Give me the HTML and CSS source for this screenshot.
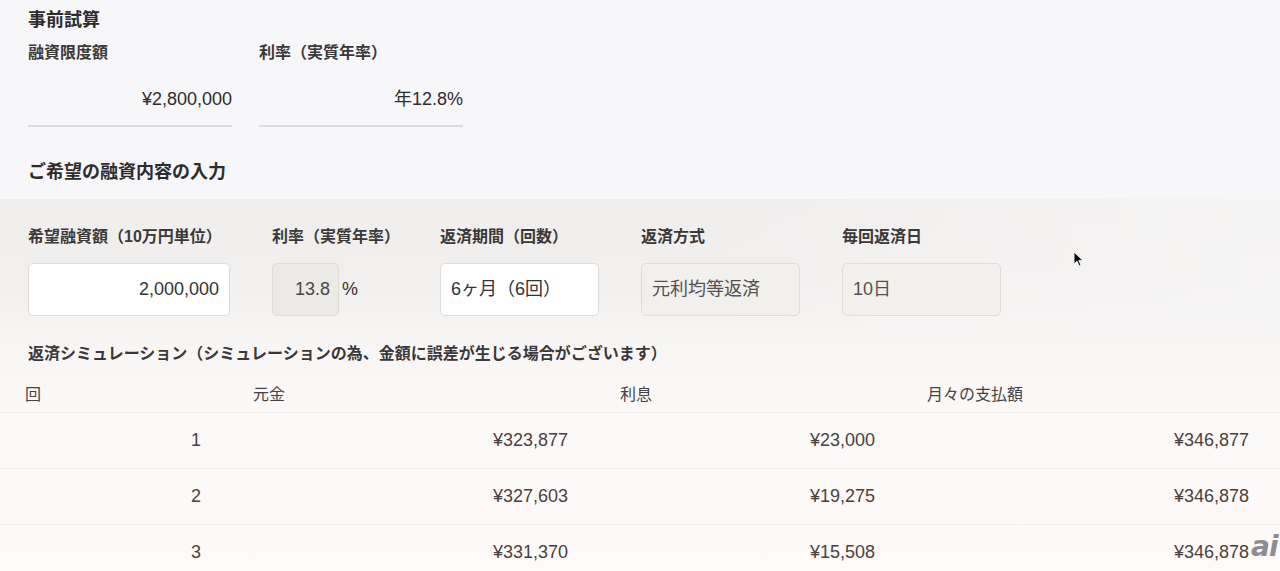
FILE: index.html
```html
<!DOCTYPE html>
<html lang="ja">
<head>
    <meta charset="UTF-8">
    <meta name="viewport" content="width=device-width, initial-scale=1.0">
    <title>事前試算</title>
    <link rel="stylesheet" href="styles.css">
</head>
<body>
    <div class="page">
        <!-- 事前試算 -->
        <section class="summary">
            <h2>事前試算</h2>
            <div class="summary-row">
                <div class="summary-item">
                    <div class="label">融資限度額</div>
                    <div class="summary-value">¥2,800,000</div>
                </div>
                <div class="summary-item">
                    <div class="label">利率（実質年率）</div>
                    <div class="summary-value">年12.8%</div>
                </div>
            </div>
            <h2 class="input-title">ご希望の融資内容の入力</h2>
        </section>

        <!-- Input panel -->
        <section class="panel">
            <div class="field-row">
                <div class="field field-amount">
                    <label class="label" for="amount">希望融資額（10万円単位）</label>
                    <input class="box box-right" id="amount" type="text" value="2,000,000">
                </div>
                <div class="field field-rate">
                    <div class="label">利率（実質年率）</div>
                    <div class="rate-wrap">
                        <div class="box box-disabled rate-box">13.8</div>
                        <span class="unit">%</span>
                    </div>
                </div>
                <div class="field field-wide">
                    <div class="label">返済期間（回数）</div>
                    <div class="box">6ヶ月（6回）</div>
                </div>
                <div class="field field-wide">
                    <div class="label">返済方式</div>
                    <div class="box box-disabled box-light">元利均等返済</div>
                </div>
                <div class="field field-wide">
                    <div class="label">毎回返済日</div>
                    <div class="box box-disabled box-light">10日</div>
                </div>
            </div>
        </section>

        <!-- Simulation -->
        <section class="simulation">
            <h3 class="label sim-title">返済シミュレーション（シミュレーションの為、金額に誤差が生じる場合がございます）</h3>
            <div class="sim-table">
                <div class="sim-head">
                    <div>回</div>
                    <div>元金</div>
                    <div>利息</div>
                    <div>月々の支払額</div>
                </div>
                <div class="sim-row">
                    <div>1</div>
                    <div>¥323,877</div>
                    <div>¥23,000</div>
                    <div>¥346,877</div>
                </div>
                <div class="sim-row">
                    <div>2</div>
                    <div>¥327,603</div>
                    <div>¥19,275</div>
                    <div>¥346,878</div>
                </div>
                <div class="sim-row">
                    <div>3</div>
                    <div>¥331,370</div>
                    <div>¥15,508</div>
                    <div>¥346,878</div>
                </div>
            </div>
        </section>

        <svg class="cursor" width="11" height="16" viewBox="0 0 11 16">
            <path d="M1 1 L1 13 L4 10.2 L6.2 15 L8 14.2 L5.8 9.4 L9.8 9.4 Z" fill="#111" stroke="#fff" stroke-width="0.8"/>
        </svg>
        <div class="watermark">ai</div>
    </div>
</body>
</html>
```

FILE: styles.css
```css
/* General Styling */
body {
    margin: 0;
    background: #f7f6f8;
    font-family: "Liberation Sans", "Noto Sans CJK JP", sans-serif;
    color: #333;
}

.page {
    position: relative;
    width: 1280px;
    height: 571px;
    overflow: hidden;
}

h2 {
    margin: 0;
    font-size: 18px;
    line-height: 18px;
    font-weight: 700;
    color: #2e2b2c;
}

.label {
    display: block;
    margin: 0;
    font-size: 16px;
    line-height: 16px;
    font-weight: 700;
    color: #3b3839;
}

/* 事前試算 */
.summary {
    padding: 11px 28px 18px;
}

.summary-row {
    display: flex;
    gap: 27px;
    margin-top: 16px;
}

.summary-item {
    width: 204px;
}

.summary-value {
    margin-top: 29px;
    padding-bottom: 17px;
    border-bottom: 2px solid #dcdadc;
    font-size: 18px;
    line-height: 18px;
    text-align: right;
    color: #2f2c2d;
}

.input-title {
    margin-top: 36px;
}

/* Input panel */
.panel {
    background:
        linear-gradient(to right, rgba(247, 246, 246, 0) 55%, rgba(247, 246, 246, 0.7) 100%),
        linear-gradient(to bottom, #f0eeed 0%, #f2f0ef 70%, #f6f4f3 100%);
    padding: 30px 28px 13px;
}

.field-row {
    display: flex;
    gap: 42px;
}

.field-amount { width: 202px; }
.field-rate { width: 126px; }
.field-wide { width: 159px; }

.box {
    box-sizing: border-box;
    width: 100%;
    height: 53px;
    margin-top: 18px;
    padding: 0 10px;
    border: 1px solid #dedbd9;
    border-radius: 5px;
    background: #fff;
    font-family: inherit;
    font-size: 18px;
    line-height: 51px;
    color: #333;
    outline: none;
}

.box-right {
    text-align: right;
    display: block;
}

.box-disabled {
    background: #eceae6;
    color: #4a4646;
}

.box-light {
    background: #f1f0ec;
    color: #555051;
}

.rate-wrap {
    display: flex;
    align-items: center;
}

.rate-box {
    width: 67px;
    padding: 0 0 0 22px;
}

.unit {
    margin-top: 18px;
    margin-left: 3px;
    font-size: 18px;
    color: #333;
}

/* Simulation */
.simulation {
    background: linear-gradient(to bottom, #f7f5f4, #fbf9f8 30%, #fdfaf8);
    padding-top: 17px;
}

.sim-title {
    padding-left: 28px;
}

.sim-table {
    margin-top: 25px;
}

.sim-head,
.sim-row {
    display: grid;
    grid-template-columns: 228px 367px 307px 1fr;
    padding-left: 25px;
    border-bottom: 1px solid #f3efed;
}

.sim-head {
    padding-bottom: 9px;
    font-size: 16px;
    line-height: 16px;
    color: #464243;
}

.sim-row {
    height: 55px;
    align-items: center;
    font-size: 18px;
    color: #4b3f3c;
}

.sim-row div {
    text-align: right;
    padding-right: 52px;
}

.sim-row div:last-child {
    padding-right: 31px;
}

/* Overlays */
.cursor {
    position: absolute;
    left: 1073px;
    top: 251px;
}

.watermark {
    position: absolute;
    left: 1251px;
    top: 530px;
    font-family: "DejaVu Sans", sans-serif;
    font-size: 28px;
    font-weight: 700;
    font-style: italic;
    color: #8d8d8f;
    letter-spacing: -1px;
}
```
